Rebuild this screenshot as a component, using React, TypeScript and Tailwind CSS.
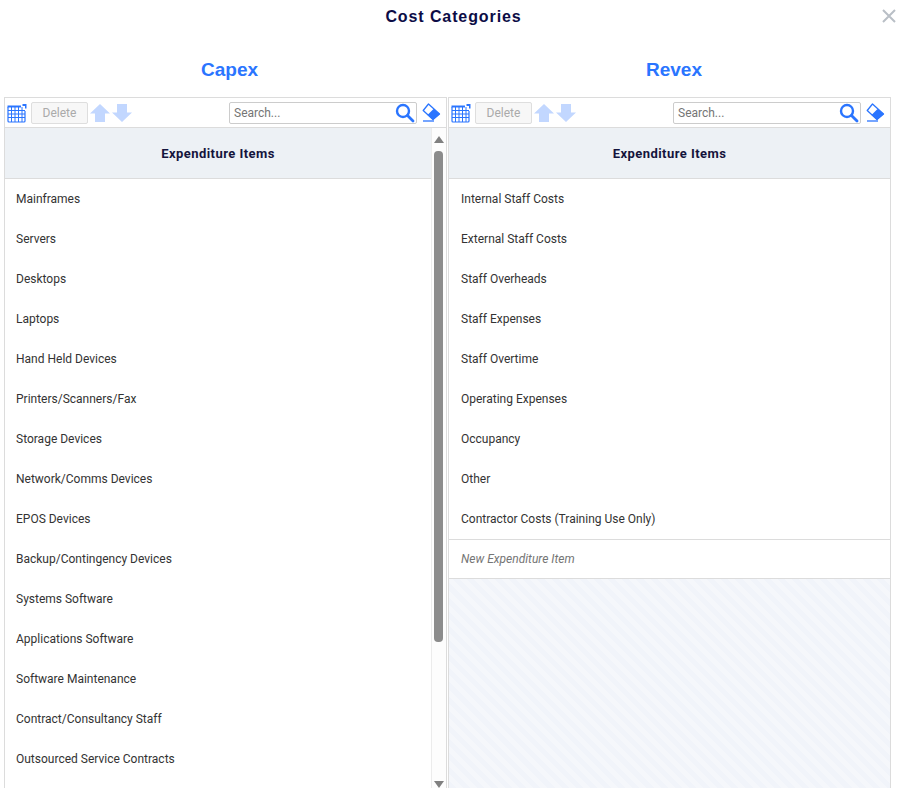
import React from "react";

const capexItems = [
  "Mainframes",
  "Servers",
  "Desktops",
  "Laptops",
  "Hand Held Devices",
  "Printers/Scanners/Fax",
  "Storage Devices",
  "Network/Comms Devices",
  "EPOS Devices",
  "Backup/Contingency Devices",
  "Systems Software",
  "Applications Software",
  "Software Maintenance",
  "Contract/Consultancy Staff",
  "Outsourced Service Contracts",
];

const revexItems = [
  "Internal Staff Costs",
  "External Staff Costs",
  "Staff Overheads",
  "Staff Expenses",
  "Staff Overtime",
  "Operating Expenses",
  "Occupancy",
  "Other",
  "Contractor Costs (Training Use Only)",
];

function GridIcon() {
  return (
    <svg width="20" height="20" viewBox="0 0 20 20" className="shrink-0">
      <path d="M1 4v14a1 1 0 0 0 1 1h15a1 1 0 0 0 1-1V8" fill="none" stroke="#2a75ff" strokeWidth="1.2" />
      <path d="M0.5 3.5h13.5" fill="none" stroke="#2a75ff" strokeWidth="2" />
      <path
        d="M4.5 4v15M8 4v15M11.5 4v15M15 4v15M1 7.5h17M1 11h17M1 14.5h17"
        fill="none"
        stroke="#2a75ff"
        strokeWidth="1"
      />
      <path d="M15.5 1h4v4.5h-1.5v-2.5h-2.5z" fill="#2a75ff" />
    </svg>
  );
}

function ArrowIcon({ down }: { down?: boolean }) {
  return (
    <svg width="20" height="18" viewBox="0 0 20 18" className={down ? "shrink-0 rotate-180" : "shrink-0"}>
      <path d="M10 0L20 9.5h-5V18H5V9.5H0z" fill="#c2d7ff" />
    </svg>
  );
}

function SearchIcon() {
  return (
    <svg width="20" height="20" viewBox="0 0 20 20" className="shrink-0">
      <circle cx="8" cy="8" r="6" fill="none" stroke="#2a75ff" strokeWidth="2.4" />
      <path d="M12.5 12.5L18 18" fill="none" stroke="#2a75ff" strokeWidth="2.8" strokeLinecap="round" />
    </svg>
  );
}

function EraserIcon() {
  return (
    <svg width="19" height="19" viewBox="0 0 19 19" className="shrink-0">
      <path d="M6.5 1L17.5 11L11 16.5L1.2 7.5z" fill="#ffffff" stroke="#2a75ff" strokeWidth="1.3" strokeLinejoin="round" />
      <path d="M11.5 6L18 11L11 17L5.5 12z" fill="#2a75ff" />
      <path d="M1 18h11" fill="none" stroke="#2a75ff" strokeWidth="1.3" />
    </svg>
  );
}

function Toolbar() {
  return (
    <div className="flex h-[30px] shrink-0 items-center border-b border-[#dcdcdc] bg-white pl-[2px]">
      <GridIcon />
      <button className="ml-[4px] h-[22px] w-[57px] rounded-[2px] border border-[#dedede] bg-[#f7f7f7] text-[12px] text-[#aaaaaa]">
        Delete
      </button>
      <div className="ml-[2px] flex gap-[2px]">
        <ArrowIcon />
        <ArrowIcon down />
      </div>
      <div className="ml-[97px] flex h-[22px] w-[188px] items-center justify-between rounded-[2px] border border-[#cccccc] pl-[4px] pr-px">
        <span className="text-[12px] text-[#757575]">Search...</span>
        <SearchIcon />
      </div>
      <div className="ml-[5px]">
        <EraserIcon />
      </div>
    </div>
  );
}

function HeaderCell() {
  return (
    <div className="flex h-[51px] shrink-0 items-center justify-center border-b border-[#dcdcdc] bg-[#edf1f5] pt-px text-[13px] font-bold tracking-[0.45px] text-[#14143c]">
      Expenditure Items
    </div>
  );
}

function Row({ label, inset }: { label: string; inset: string }) {
  return <div className={`${inset} flex h-[40px] shrink-0 items-center text-[12px] text-[#333333]`}>{label}</div>;
}

function Scrollbar() {
  return (
    <div className="flex w-[15px] shrink-0 flex-col items-center border-l border-[#ececec] bg-[#fdfdfd] pr-px">
      <div className="mt-[8px] h-0 w-0 border-x-[5px] border-b-[7px] border-x-transparent border-b-[#808080]" />
      <div className="mt-[8px] h-[491px] w-[9px] rounded-[4px] bg-[#8c8c8c]" />
      <div className="mt-[139px] h-0 w-0 border-x-[5px] border-t-[7px] border-x-transparent border-t-[#808080]" />
    </div>
  );
}

export default function App() {
  return (
    <div className="h-[788px] w-[899px] overflow-hidden bg-white font-['Roboto','Liberation_Sans',sans-serif]">
      <div className="relative h-[33px] pl-[8px] text-center font-['Liberation_Sans',sans-serif] text-[16px] font-bold leading-[33px] tracking-[0.9px] text-[#0c0c46]">
        Cost Categories
        <svg width="14" height="14" viewBox="0 0 14 14" className="absolute right-[3px] top-[9px]">
          <path d="M1 1L13 13M13 1L1 13" stroke="#b9bfc6" strokeWidth="2" />
        </svg>
      </div>

      <div className="flex h-[64px] pl-[4px] font-['Liberation_Sans',sans-serif] text-[19px] font-bold text-[#2a75ff]">
        <div className="w-[451px] pt-[23px] text-center">Capex</div>
        <div className="w-[438px] pt-[23px] text-center">Revex</div>
      </div>

      <div className="flex h-[691px] gap-px pl-[4px]">
        <div className="flex w-[443px] flex-col border-x border-t border-[#dcdcdc]">
          <Toolbar />
          <div className="flex min-h-0 flex-1">
            <div className="flex min-w-0 flex-1 flex-col overflow-hidden">
              <HeaderCell />
              {capexItems.map((item) => (
                <Row key={item} label={item} inset="pl-[11px]" />
              ))}
            </div>
            <Scrollbar />
          </div>
        </div>

        <div className="flex w-[443px] flex-col border-x border-t border-[#dcdcdc]">
          <Toolbar />
          <HeaderCell />
          {revexItems.map((item) => (
            <Row key={item} label={item} inset="pl-[12px]" />
          ))}
          <div className="flex h-[40px] shrink-0 items-center border-y border-[#dcdcdc] pl-[12px] text-[12px] italic text-[#757575]">
            New Expenditure Item
          </div>
          <div className="min-h-0 flex-1 bg-[repeating-linear-gradient(45deg,#f1f4fa_0px,#f1f4fa_5px,#f5f7fb_5px,#f5f7fb_10px)]" />
        </div>
      </div>
    </div>
  );
}
